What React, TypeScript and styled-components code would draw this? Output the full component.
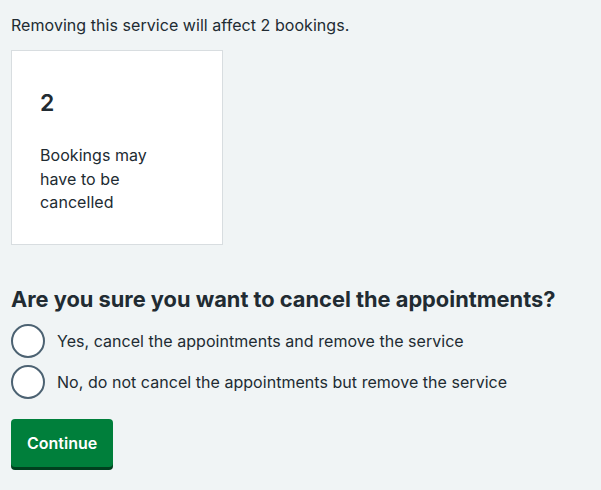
import React from "react";
import styled, { createGlobalStyle } from "styled-components";

const Global = createGlobalStyle`
  html, body { margin: 0; padding: 0; background: #f0f4f5; }
  body { font-family: Inter, "Noto Sans", Arial, sans-serif; color: #212b32; }
  * { box-sizing: border-box; }
`;

const Page = styled.main`
  padding: 13px 11px 20px 11px;
  min-height: 490px;
`;

const Lead = styled.p`
  margin: 0 0 13px 0;
  font-size: 16px;
  line-height: 24px;
  letter-spacing: 0.05px;
`;

const Card = styled.div`
  width: 212px;
  background: #ffffff;
  border: 1px solid #d8dde0;
  padding: 28px 28px 29px 28px;
`;

const Count = styled.div`
  margin-top: 9px;
  font-size: 23px;
  line-height: 30px;
  font-weight: 600;
`;

const CardText = styled.p`
  margin: 26px 0 0 0;
  max-width: 125px;
  font-size: 16px;
  line-height: 23.5px;
  letter-spacing: 0.05px;
`;

const Fieldset = styled.fieldset`
  margin: 40px 0 0 0;
  padding: 0;
  border: 0;
  min-width: 0;
`;

const Legend = styled.legend`
  padding: 0;
  margin: 0 0 11px 0;
  font-size: 21.8px;
  line-height: 28px;
  font-weight: 700;
`;

const Options = styled.div`
  display: flex;
  flex-direction: column;
  gap: 7px;
`;

const Option = styled.label`
  display: flex;
  align-items: center;
  gap: 12px;
  font-size: 16px;
  line-height: 24px;
  letter-spacing: 0.04px;
  cursor: pointer;
`;

const RadioInput = styled.input`
  appearance: none;
  margin: 0;
  width: 34px;
  height: 34px;
  border: 2px solid #4c6272;
  border-radius: 50%;
  background: #ffffff;
  flex: none;
`;

const Button = styled.button`
  margin-top: 20px;
  height: 48px;
  padding: 0 16px;
  border: 0;
  border-radius: 4px;
  background: #007f3b;
  box-shadow: 0 3px 0 #00401e;
  color: #ffffff;
  font-family: inherit;
  font-size: 16px;
  font-weight: 600;
  line-height: 24px;
  cursor: pointer;
`;

export default function App() {
  return (
    <>
      <Global />
      <Page>
        <Lead>Removing this service will affect 2 bookings.</Lead>
        <Card>
          <Count>2</Count>
          <CardText>Bookings may have to be cancelled</CardText>
        </Card>
        <Fieldset>
          <Legend>Are you sure you want to cancel the appointments?</Legend>
          <Options>
            <Option>
              <RadioInput type="radio" name="cancel" value="yes" />
              Yes, cancel the appointments and remove the service
            </Option>
            <Option>
              <RadioInput type="radio" name="cancel" value="no" />
              No, do not cancel the appointments but remove the service
            </Option>
          </Options>
        </Fieldset>
        <Button type="button">Continue</Button>
      </Page>
    </>
  );
}
